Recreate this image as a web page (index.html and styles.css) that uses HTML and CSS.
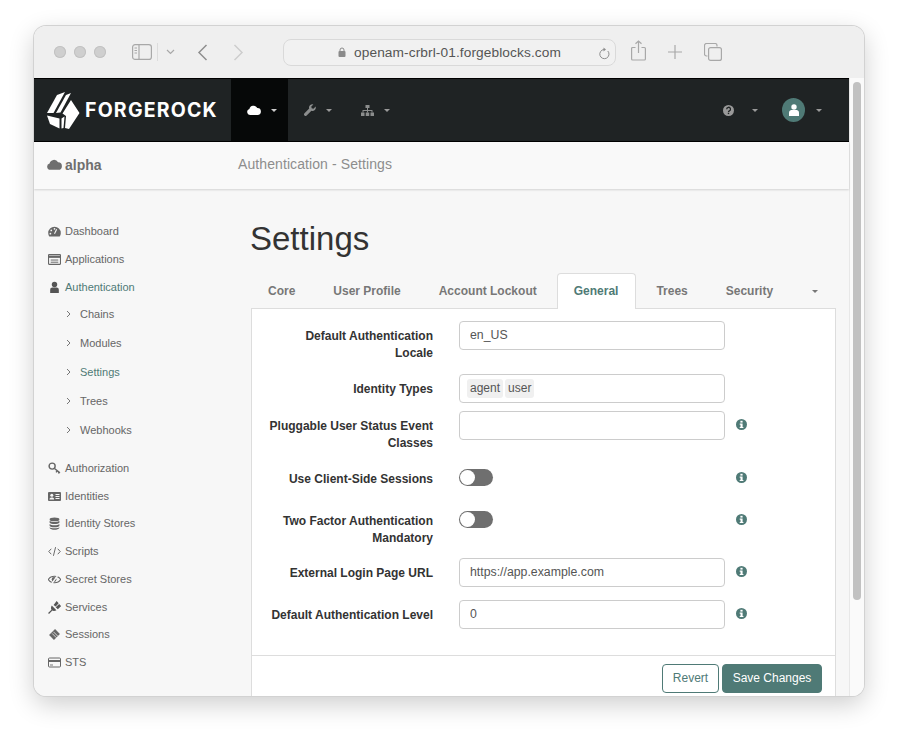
FILE: index.html
```html
<!DOCTYPE html>
<html lang="en">
<head>
    <meta charset="UTF-8">
    <meta name="viewport" content="width=device-width, initial-scale=1.0">
    <title>Settings</title>
    <link rel="stylesheet" href="styles.css">
</head>
<body>
    <div class="window">

        <!-- Browser toolbar -->
        <div class="toolbar">
            <div class="lights"><span></span><span></span><span></span></div>
            <svg class="tb-sidebar" width="20" height="16" viewBox="0 0 20 16" fill="none" stroke="#a8a8a8" stroke-width="1.2"><rect x="0.6" y="0.6" width="18.8" height="14.8" rx="2.5"/><path d="M7 1v14"/><path d="M2.5 4h2.5M2.5 6.5h2.5M2.5 9h2.5" stroke-width="1"/></svg>
            <span class="tb-divider"></span>
            <svg class="tb-chevron" width="9" height="6" viewBox="0 0 9 6" fill="none" stroke="#a8a8a8" stroke-width="1.2"><path d="M1 1l3.5 3.5L8 1"/></svg>
            <svg class="tb-back" width="11" height="17" viewBox="0 0 11 17" fill="none" stroke="#8e8e8e" stroke-width="1.5"><path d="M9.5 1L2 8.5l7.5 7.5"/></svg>
            <svg class="tb-forward" width="11" height="17" viewBox="0 0 11 17" fill="none" stroke="#cdcdcd" stroke-width="1.5"><path d="M1.5 1L9 8.5 1.5 16"/></svg>
            <div class="address">
                <svg width="8" height="10" viewBox="0 0 8 10" fill="#8a8a8a"><rect x="0.5" y="4" width="7" height="6" rx="1"/><path d="M2 4V3a2 2 0 0 1 4 0v1" fill="none" stroke="#8a8a8a"/></svg>
                <span class="address-text">openam-crbrl-01.forgeblocks.com</span>
                <svg class="reload" width="12" height="13" viewBox="0 0 12 13" fill="none" stroke="#8e8e8e" stroke-width="1"><path d="M9.8 4A4.6 4.6 0 1 1 6 2.5"/><path d="M5.5 0.5L8 2.5 5.5 4.5" fill="#8e8e8e" stroke="none"/></svg>
            </div>
            <svg class="tb-share" width="15" height="21" viewBox="0 0 15 21" fill="none" stroke="#a8a8a8" stroke-width="1.2"><path d="M4.5 7.5H1.6a1 1 0 0 0-1 1V19a1 1 0 0 0 1 1h11.8a1 1 0 0 0 1-1V8.500a1 1 0 0 0-1-1h-2.900"/><path d="M7.500 13V1M4.500 3.800L7.500 1l3 2.800"/></svg>
            <svg class="tb-plus" width="14" height="14" viewBox="0 0 14 14" fill="none" stroke="#a8a8a8" stroke-width="1.2"><path d="M7 0v14M0 7h14"/></svg>
            <svg class="tb-tabs" width="18" height="18" viewBox="0 0 18 18" fill="none" stroke="#a8a8a8" stroke-width="1.2"><path d="M3.500 13H2.500a2 2 0 0 1-2-2V2.500a2 2 0 0 1 2-2H11a2 2 0 0 1 2 2v1"/><rect x="4.600" y="4.600" width="12.800" height="12.800" rx="2"/></svg>
        </div>

        <div class="viewport">
            <div class="page">

                <!-- Top nav -->
                <nav class="topnav">
                    <div class="brand">
                        <svg width="33" height="37" viewBox="0 0 33 37" fill="#fff"><path d="M0 21L10 3 18 0 6.500 21z"/><path d="M9 21L19 3l5-2L13.500 20.500z"/><path d="M24 8L32.500 21 22 37l-4-1L19 24l-3.500-2.500z"/><path d="M0 23.500L12.500 26.500V36.500L3 32z"/><path d="M14.500 26.500L17.500 24.500 16.500 36 14.500 36.500z"/></svg>
                        <span class="brand-name">FORGEROCK</span>
                    </div>
                    <a class="nav-item active">
                        <svg width="14" height="10" viewBox="0 0 14 10" fill="#fff"><path d="M3 10a3 3 0 0 1-.6-5.900A4.200 4.200 0 0 1 10.300 3 3.500 3.500 0 0 1 10.500 10z"/></svg>
                        <span class="caret"></span>
                    </a>
                    <a class="nav-item">
                        <svg width="12" height="12" viewBox="0 0 12 12" fill="#8b8d8d"><path d="M11.600 2.600L9.500 4.700 7.700 4.300 7.300 2.500 9.400.4A3.300 3.300 0 0 0 5.200 4.600L.5 9.300a1.500 1.500 0 0 0 2.200 2.200l4.700-4.700a3.300 3.300 0 0 0 4.200-4.200z"/></svg>
                        <span class="caret"></span>
                    </a>
                    <a class="nav-item">
                        <svg width="13" height="11" viewBox="0 0 13 11" fill="#8b8d8d"><rect x="4.500" y="0" width="4" height="3"/><rect x="0" y="7.500" width="3.500" height="3.500"/><rect x="4.750" y="7.500" width="3.500" height="3.500"/><rect x="9.500" y="7.500" width="3.500" height="3.500"/><path d="M6 3h1v2h4.500v2.500h-1V6H7v1.500H6V6H2.500v1.500h-1V5H6z"/></svg>
                        <span class="caret"></span>
                    </a>
                    <div class="nav-right">
                        <svg class="help" width="11" height="11" viewBox="0 0 11 11"><circle cx="5.500" cy="5.500" r="5.500" fill="#999"/><path d="M3.700 4.200a1.900 1.900 0 1 1 2.700 1.700c-.6.300-.9.500-.9 1" fill="none" stroke="#1f2324" stroke-width="1.300"/><rect x="4.800" y="7.700" width="1.400" height="1.400" fill="#1f2324"/></svg>
                        <span class="caret help-caret"></span>
                        <span class="avatar">
                            <svg width="10" height="12" viewBox="0 0 10 12" fill="#fff"><circle cx="5" cy="3" r="2.700"/><path d="M0 12V8.500C0 7 1.300 6 2.500 6h5C8.700 6 10 7 10 8.500V12z"/></svg>
                        </span>
                        <span class="caret"></span>
                    </div>
                </nav>

                <!-- Realm and page title -->
                <div class="subheader">
                    <div class="realm">
                        <svg width="15" height="11" viewBox="0 0 14 10" fill="#6f6f6f"><path d="M3 10a3 3 0 0 1-.6-5.900A4.200 4.200 0 0 1 10.300 3 3.500 3.500 0 0 1 10.500 10z"/></svg>
                        alpha
                    </div>
                    <div class="crumb">Authentication - Settings</div>
                </div>

                <div class="main">
                    <!-- Sidebar -->
                    <ul class="sidenav">
                        <li class="row-dashboard"><svg viewBox="0 0 12 12" fill="#666"><path d="M6 1.500A5.800 5.800 0 0 0 .2 7.300c0 1.300.4 2.400 1 3.200h9.600c.6-.8 1-1.900 1-3.200A5.800 5.800 0 0 0 6 1.500z"/><path d="M6 8L8 4" stroke="#f7f7f7" stroke-width="1"/><circle cx="3" cy="5" r=".8" fill="#f7f7f7"/><circle cx="6" cy="3.500" r=".8" fill="#f7f7f7"/><circle cx="2.200" cy="8" r=".8" fill="#f7f7f7"/></svg>Dashboard</li>
                        <li class="row-apps"><svg viewBox="0 0 12 12" fill="none" stroke="#666"><rect x=".5" y="1.500" width="11" height="9" rx=".5"/><path d="M.5 3.500h11" stroke-width="2"/><path d="M2.500 6.500h7M2.500 8.500h7" stroke-width=".9"/></svg>Applications</li>
                        <li class="row-auth active"><svg viewBox="0 0 12 12" fill="#555"><circle cx="6" cy="3.200" r="2.500"/><path d="M2 11V8.200C2 6.800 3 6 4 6h4c1 0 2 .8 2 2.200V11z"/></svg>Authentication</li>
                        <li class="sub row-chains"><svg class="chev" viewBox="0 0 5 8" fill="none" stroke="#777"><path d="M1 1l3 3-3 3"/></svg>Chains</li>
                        <li class="sub"><svg class="chev" viewBox="0 0 5 8" fill="none" stroke="#777"><path d="M1 1l3 3-3 3"/></svg>Modules</li>
                        <li class="sub active"><svg class="chev" viewBox="0 0 5 8" fill="none" stroke="#777"><path d="M1 1l3 3-3 3"/></svg>Settings</li>
                        <li class="sub"><svg class="chev" viewBox="0 0 5 8" fill="none" stroke="#777"><path d="M1 1l3 3-3 3"/></svg>Trees</li>
                        <li class="sub row-webhooks"><svg class="chev" viewBox="0 0 5 8" fill="none" stroke="#777"><path d="M1 1l3 3-3 3"/></svg>Webhooks</li>
                        <li><svg viewBox="0 0 12 12" fill="none" stroke="#666" stroke-width="1.300"><circle cx="3.800" cy="3.800" r="2.800"/><path d="M6 6l5 4M8.500 8l-1 1.500M10.500 9.500l-1 1"/></svg>Authorization</li>
                        <li><svg viewBox="0 0 13 12" fill="#666"><rect x="0" y="1.500" width="13" height="9" rx="1"/><circle cx="3.800" cy="4.800" r="1.500" fill="#f7f7f7"/><path d="M1.500 9c0-1.500 1-2 2.300-2s2.300.5 2.300 2z" fill="#f7f7f7"/><path d="M7.500 4h4M7.500 6h4M7.500 8h4" stroke="#f7f7f7"/></svg>Identities</li>
                        <li class="row-stores"><svg viewBox="0 0 12 12" fill="#666"><ellipse cx="6" cy="2.200" rx="4.500" ry="1.800"/><path d="M1.500 3.500c1 1.500 8 1.500 9 0v1.800c-1 1.700-8 1.700-9 0zM1.500 6.500c1 1.500 8 1.500 9 0v1.800c-1 1.700-8 1.700-9 0zM1.500 9.400c1 1.400 8 1.400 9 0v.8c-1 2.200-8 2.200-9 0z"/></svg>Identity Stores</li>
                        <li><svg viewBox="0 0 12 12" fill="none" stroke="#666" stroke-width=".9"><path d="M3 3.500L.7 6 3 8.500M9 3.500L11.300 6 9 8.500M7 2L5 10"/></svg>Scripts</li>
                        <li><svg viewBox="0 0 12 12" fill="#666"><path d="M.3 6C1.500 4 3.500 3 6 3s4.500 1 5.700 3C10.500 8 8.500 9 6 9S1.500 8 .3 6z" fill="none" stroke="#666"/><circle cx="5.600" cy="6" r="2.200"/><path d="M9.500 1.500L3 10.500" stroke="#f7f7f7" stroke-width="1.400"/></svg>Secret Stores</li>
                        <li><svg viewBox="0 0 12 12" fill="#555"><path d="M3.500 4.200L7.800 8.500C6.500 9.500 4.500 9.500 3.500 8.500S2.500 5.500 3.500 4.200z"/><path d="M6 3.500l2-2.500 1 1-2 2.200zM8 5.700l2.300-2 1 1-2.200 2zM3.600 8.400L.5 11.500" stroke="#555" stroke-width="1.200"/></svg>Services</li>
                        <li class="row-sessions"><svg viewBox="0 0 12 12" fill="#666"><path d="M6.500 1L11 5.500 5.500 11 1 6.500z"/><path d="M5 3.500l4 4M3.800 5l4 4" stroke="#f7f7f7" stroke-width=".7"/></svg>Sessions</li>
                        <li><svg viewBox="0 0 13 12" fill="none" stroke="#666"><rect x=".5" y="1.500" width="12" height="9" rx="1"/><path d="M.5 4.500h12" stroke-width="2"/><path d="M2 8.500h3" stroke-width=".9"/></svg>STS</li>
                    </ul>

                    <div class="content">
                        <h1>Settings</h1>

                        <ul class="tabs">
                            <li>Core</li>
                            <li>User Profile</li>
                            <li>Account Lockout</li>
                            <li class="active">General</li>
                            <li>Trees</li>
                            <li>Security</li>
                            <li class="tab-more"><span class="caret"></span></li>
                        </ul>

                        <div class="panel">
                            <form class="panel-body">
                                <div class="form-row">
                                    <label>Default Authentication Locale</label>
                                    <input class="field" type="text" value="en_US">
                                </div>
                                <div class="form-row tight">
                                    <label>Identity Types</label>
                                    <div class="field tags"><span>agent</span><span>user</span></div>
                                </div>
                                <div class="form-row">
                                    <label>Pluggable User Status Event Classes</label>
                                    <input class="field" type="text">
                                    <svg class="info" viewBox="0 0 11 11"><use href="#info"/></svg>
                                </div>
                                <div class="form-row">
                                    <label>Use Client-Side Sessions</label>
                                    <div class="toggle-wrap"><span class="toggle"></span></div>
                                    <svg class="info" viewBox="0 0 11 11"><use href="#info"/></svg>
                                </div>
                                <div class="form-row two-line">
                                    <label>Two Factor Authentication Mandatory</label>
                                    <div class="toggle-wrap"><span class="toggle"></span></div>
                                    <svg class="info" viewBox="0 0 11 11"><use href="#info"/></svg>
                                </div>
                                <div class="form-row">
                                    <label>External Login Page URL</label>
                                    <input class="field" type="text" value="https://app.example.com">
                                    <svg class="info" viewBox="0 0 11 11"><use href="#info"/></svg>
                                </div>
                                <div class="form-row">
                                    <label>Default Authentication Level</label>
                                    <input class="field" type="text" value="0">
                                    <svg class="info" viewBox="0 0 11 11"><use href="#info"/></svg>
                                </div>
                            </form>
                            <div class="panel-footer">
                                <button class="btn btn-default" type="button">Revert</button>
                                <button class="btn btn-primary" type="button">Save Changes</button>
                            </div>
                        </div>
                    </div>
                </div>
            </div>

            <div class="scrollbar"><span class="thumb"></span></div>
        </div>
    </div>

    <svg class="defs" width="0" height="0">
        <symbol id="info" viewBox="0 0 11 11">
            <circle cx="5.500" cy="5.500" r="5.500" fill="#4f7a76"/>
            <rect x="4.400" y="1.800" width="2.200" height="1.800" fill="#fff"/>
            <path d="M3.700 4.500h2.900v3.400h.8v1.200H3.700V7.900h.8V5.700h-.8z" fill="#fff"/>
        </symbol>
    </svg>
</body>
</html>
```

FILE: styles.css
```css
html, body {
    margin: 0;
    padding: 0;
    height: 100%;
    background-color: #fff;
    font-family: "Liberation Sans", Arial, sans-serif;
    overflow: hidden;
}

.defs {
    display: block;
}

/* Browser window */
.window {
    width: 830px;
    height: 670px;
    margin: 26px 0 0 34px;
    border-radius: 12px;
    overflow: hidden;
    display: flex;
    flex-direction: column;
    box-shadow: 0 0 0 1px #d2d2d2, 0 8px 26px rgba(0, 0, 0, 0.2);
}

.toolbar {
    height: 52px;
    flex: none;
    box-sizing: border-box;
    background-color: #efefef;
    display: flex;
    align-items: center;
    padding-left: 20px;
}

.lights {
    display: flex;
    gap: 8px;
}

.lights span {
    width: 12px;
    height: 12px;
    border-radius: 50%;
    background-color: #cfcfcf;
    box-shadow: inset 0 0 0 1px #c2c2c2;
}

.tb-sidebar {
    margin-left: 26px;
}

.tb-divider {
    width: 1px;
    height: 18px;
    background-color: #dcdcdc;
    margin-left: 5px;
}

.tb-chevron {
    margin-left: 8px;
}

.tb-back {
    margin-left: 22px;
}

.tb-forward {
    margin-left: 25px;
}

.address {
    width: 333px;
    height: 27px;
    box-sizing: border-box;
    margin-left: 39px;
    border: 1px solid #d9d9d9;
    border-radius: 8px;
    background-color: #f1f1f1;
    display: flex;
    align-items: center;
    padding-left: 54px;
    position: relative;
    font-size: 13.7px;
    color: #555;
}

.address-text {
    margin-left: 8px;
    letter-spacing: 0.1px;
}

.reload {
    position: absolute;
    right: 5px;
    top: 7px;
}

.tb-share {
    margin-left: 15px;
    margin-bottom: 3px;
}

.tb-plus {
    margin-left: 22px;
}

.tb-tabs {
    margin-left: 22px;
}

/* Page area */
.viewport {
    flex: 1;
    display: flex;
    min-height: 0;
    background-color: #f7f7f7;
}

.page {
    flex: 1;
    min-width: 0;
    display: flex;
    flex-direction: column;
}

.scrollbar {
    width: 15px;
    flex: none;
    box-sizing: border-box;
    background-color: #fafafa;
    border-left: 1px solid #e8e8e8;
    padding: 4px 3px 0 3px;
}

.thumb {
    display: block;
    height: 518px;
    border-radius: 4px;
    background-color: #c1c1c1;
}

.topnav {
    height: 64px;
    flex: none;
    box-sizing: border-box;
    background-color: #1f2324;
    border-top: 1px solid #000;
    border-bottom: 1px solid #000;
    display: flex;
}

.brand {
    width: 197px;
    padding-left: 13px;
    box-sizing: border-box;
    display: flex;
    align-items: center;
    color: #fff;
}

.brand-name {
    font-family: "Inter", sans-serif;
    font-weight: 700;
    font-size: 19.5px;
    letter-spacing: 1.2px;
    margin-left: 5px;
}

.nav-item {
    width: 57px;
    box-sizing: border-box;
    padding-left: 16px;
    display: flex;
    align-items: center;
    gap: 10px;
}

.nav-item.active {
    background-color: #060808;
}

.caret {
    display: inline-block;
    border-top: 3px solid #9a9a9a;
    border-left: 3px solid transparent;
    border-right: 3px solid transparent;
}

.nav-item.active .caret {
    border-top-color: #ccc;
}

.nav-right {
    margin-left: auto;
    padding-right: 27px;
    display: flex;
    align-items: center;
}

.help-caret {
    margin-left: 18px;
}

.avatar {
    width: 23px;
    height: 24px;
    border-radius: 50%;
    background-color: #4f7a76;
    display: flex;
    align-items: center;
    justify-content: center;
    margin-left: 24px;
    margin-right: 11px;
}

.subheader {
    height: 47px;
    flex: none;
    box-sizing: border-box;
    background-color: #f9f9f9;
    box-shadow: 0 1px 2px rgba(0, 0, 0, 0.15);
    display: flex;
    align-items: center;
    position: relative;
}

.realm {
    width: 204px;
    box-sizing: border-box;
    padding-left: 13px;
    margin-bottom: 2px;
    font-size: 14px;
    font-weight: bold;
    color: #6f6f6f;
    display: flex;
    align-items: center;
    gap: 3px;
}

.crumb {
    font-size: 14px;
    letter-spacing: 0.09px;
    color: #8d8d8d;
    margin-bottom: 3px;
}

.main {
    flex: 1;
    min-height: 0;
    display: flex;
}

/* Sidebar */
.sidenav {
    width: 216px;
    flex: none;
    box-sizing: border-box;
    list-style: none;
    margin: 0;
    padding: 28px 0 0 14px;
    font-size: 11px;
    color: #666;
}

.sidenav li {
    height: 28px;
    display: flex;
    align-items: center;
    white-space: nowrap;
}

.sidenav li svg {
    width: 13px;
    height: 13px;
    margin-right: 4px;
}

.sidenav li.active {
    color: #4f7a76;
}

.sidenav li.sub {
    height: 29px;
    padding-left: 18px;
}

.sidenav li.sub svg {
    width: 5px;
    height: 8px;
    margin-right: 9px;
}

.sidenav li.row-chains {
    height: 26px;
    margin-bottom: 1px;
}

.sidenav li.row-webhooks {
    margin-bottom: 10px;
}

.sidenav li.row-stores,
.sidenav li.row-sessions {
    height: 26px;
    margin-bottom: 1px;
}

/* Content */
.content {
    width: 585px;
    flex: none;
    margin-left: 1px;
}

h1 {
    font-size: 33px;
    font-weight: normal;
    color: #333;
    margin: 31px 0 15px -1px;
    line-height: 38px;
}

.tabs {
    list-style: none;
    margin: 0;
    padding: 0;
    height: 35px;
    display: flex;
    font-size: 12px;
    font-weight: bold;
    color: #777;
    position: relative;
    z-index: 1;
}

.tabs li {
    padding: 0 16px;
    line-height: 35px;
    border: 1px solid transparent;
    border-bottom: none;
    margin-right: 4px;
    box-sizing: border-box;
    white-space: nowrap;
}

.tabs li.active {
    height: 36px;
    margin-left: -1px;
    padding-right: 17px;
    margin-right: 3px;
    background-color: #fff;
    border-color: #ddd;
    border-radius: 4px 4px 0 0;
    color: #4f7a76;
}

.tabs li.tab-more {
    margin-left: auto;
    margin-right: 0;
    padding: 0 17px;
    display: flex;
    align-items: center;
}

.tabs .caret {
    border-top-color: #777;
}

.panel {
    background-color: #fff;
    border: 1px solid #ddd;
    border-bottom: none;
    height: 420px;
    box-sizing: border-box;
}

.panel-body {
    padding: 12px 0 26px 0;
    border-bottom: 1px solid #ddd;
}

.form-row {
    display: flex;
    align-items: flex-start;
    margin-bottom: 13px;
}

.form-row:last-child {
    margin-bottom: 0;
}

.form-row.tight {
    margin-bottom: 8px;
}

.form-row.two-line {
    margin-bottom: 12px;
}

.form-row label {
    width: 181px;
    margin: 0 26px -1px 0;
    padding: 7px 0 0 15px;
    flex: none;
    box-sizing: border-box;
    text-align: right;
    font-size: 12px;
    font-weight: bold;
    line-height: 17px;
    color: #333;
}

.field {
    width: 266px;
    height: 29px;
    flex: none;
    box-sizing: border-box;
    border: 1px solid #ccc;
    border-radius: 4px;
    padding: 0 10px 1px;
    margin: 0;
    font-family: "Liberation Sans", Arial, sans-serif;
    font-size: 12.3px;
    color: #555;
    background-color: #fff;
}

.tags {
    display: flex;
    align-items: center;
    gap: 2px;
    padding: 0 7px;
    font-size: 12px;
}

.tags span {
    background-color: #f0f0f0;
    border-radius: 3px;
    padding: 0 3px;
    line-height: 19px;
}

.toggle-wrap {
    width: 266px;
    height: 29px;
    flex: none;
    padding-top: 5px;
    box-sizing: border-box;
}

.toggle {
    display: block;
    width: 34px;
    height: 17px;
    border-radius: 9px;
    background-color: #6f6f6f;
    position: relative;
}

.toggle::before {
    content: "";
    position: absolute;
    left: 1px;
    top: 1px;
    width: 15px;
    height: 15px;
    border-radius: 50%;
    background-color: #fff;
}

.info {
    width: 11px;
    height: 11px;
    flex: none;
    margin: 8px 0 0 11px;
}

.panel-footer {
    display: flex;
    justify-content: flex-end;
    gap: 3px;
    padding: 8px 13px 0 0;
}

.btn {
    height: 29px;
    box-sizing: border-box;
    border-radius: 4px;
    font-family: "Liberation Sans", Arial, sans-serif;
    font-size: 12px;
    padding: 0 0 2px;
    white-space: nowrap;
    cursor: pointer;
}

.btn-default {
    width: 57px;
    background-color: #fff;
    border: 1px solid #4f7a76;
    color: #4f7a76;
}

.btn-primary {
    width: 100px;
    background-color: #4f7a76;
    border: 1px solid #4f7a76;
    color: #fff;
}
```
